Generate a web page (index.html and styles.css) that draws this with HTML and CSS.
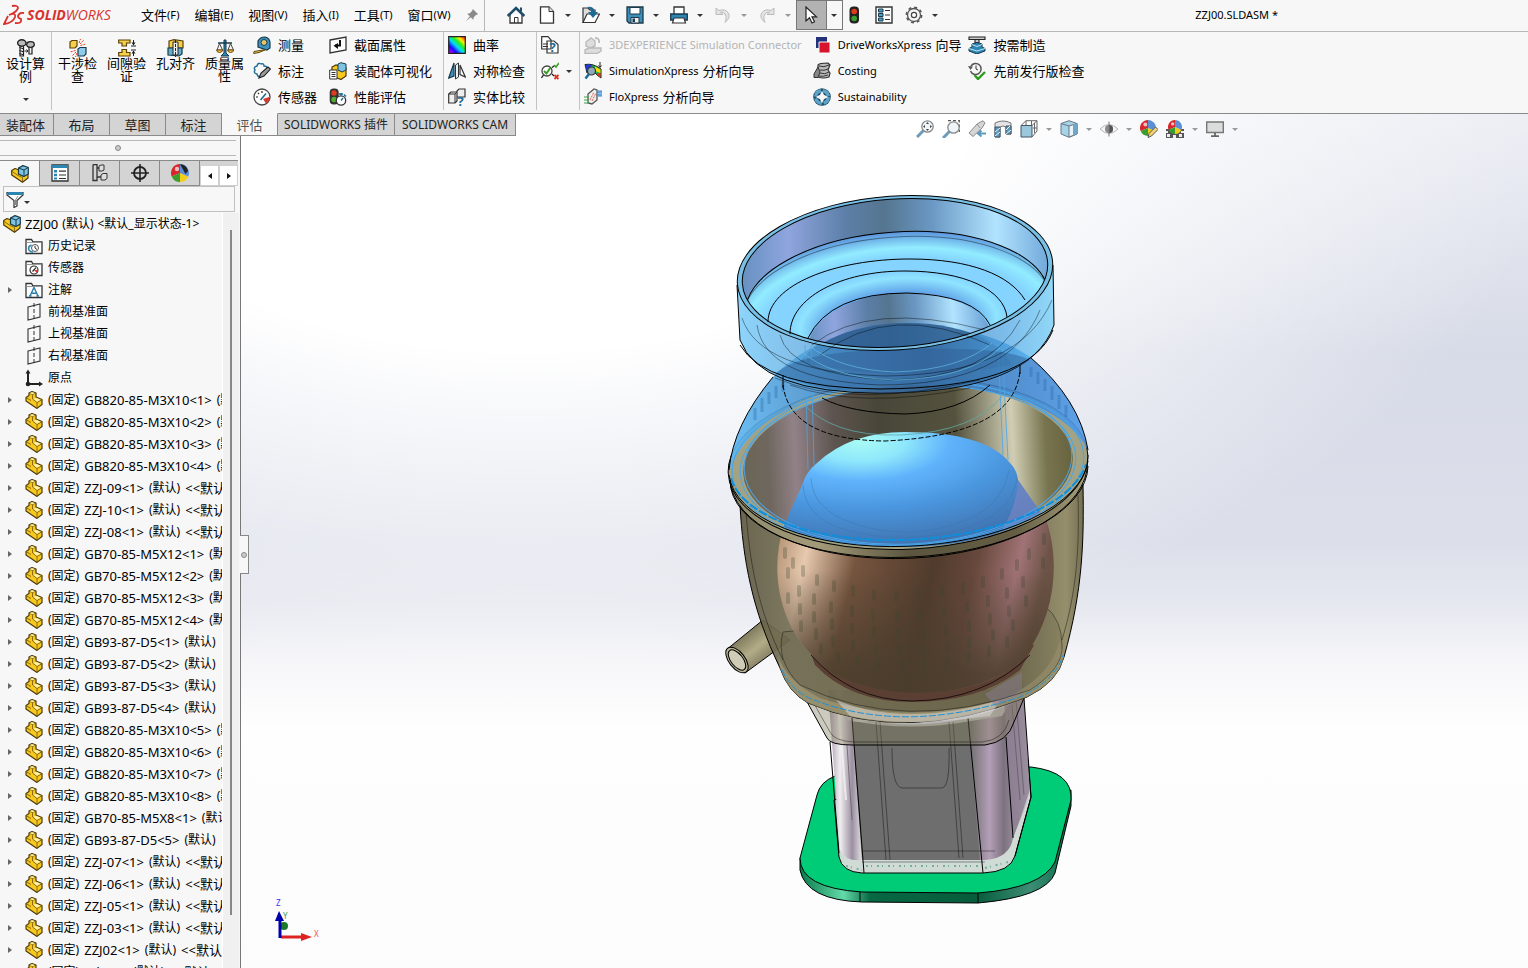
FILE: index.html
```html
<!DOCTYPE html>
<html lang="zh-CN">
<head>
	<meta charset="UTF-8">
	<title>SOLIDWORKS - ZZJ00.SLDASM</title>
	<link rel="stylesheet" href="styles.css">
</head>
<body>
<svg class="sprite" aria-hidden="true">
	<defs>
		<linearGradient id="rainbow" x1="0" y1="1" x2="1" y2="0"><stop offset="0" stop-color="#e0f"/><stop offset=".25" stop-color="#20f"/><stop offset=".45" stop-color="#0df"/><stop offset=".62" stop-color="#2e2"/><stop offset=".78" stop-color="#fe0"/><stop offset="1" stop-color="#f00"/></linearGradient>
		<!-- деталь -->
		<symbol id="i-part" viewBox="0 0 18 18"><path d="M1 10V6.500L4 4.500V2L7 .5 11 2V6L17 8.500V13.500L12 17.400 1 10Z" fill="#f7c81e" stroke="#4d3a08" stroke-linejoin="round" stroke-width="1.200"/><path d="M4 2.200 7.500 3.500 11 2M7.500 3.500V8L12 11.500 17 8.700M12 11.500V17M1 6.600 6 9.500" fill="none" stroke="#6e540c" stroke-width=".8"/><path d="M4.800 2 7 1.200 10 2.100 7.500 3.200ZM8.500 8 11 6.800 15.500 8.700 12 10.700Z" fill="#fff2a6"/></symbol>
		<!-- сборка -->
		<symbol id="i-asm" viewBox="0 0 18 18"><path d="M.7 10V5.500L4 3.500 8 5V9L12 11 17 8V13L11.500 17.300.7 10Z" fill="#f7c81e" stroke="#4d3a08" stroke-linejoin="round" stroke-width="1.200"/><path d="M1.200 6.500 7 10.500 11.500 12.500V17" fill="none" stroke="#6e540c" stroke-width=".8"/><path d="M7.500 3 12 .6 17.300 2.500V9L13 11.500 7.500 9Z" fill="#7fc3e2" stroke="#17394c" stroke-linejoin="round" stroke-width="1.200"/><path d="M7.500 3 13 5V11M13 5 17 2.500" fill="none" stroke="#17394c"/></symbol>
		<symbol id="i-folder" viewBox="0 0 18 18"><path d="M1 2.500H6.500L8 5H17V16.500H1Z" fill="#fff" stroke="#333" stroke-width="1.300"/><path d="M1.500 5.500H16.500" stroke="#999"/></symbol>
		<symbol id="i-history" viewBox="0 0 18 18"><use href="#i-folder"/><circle cx="10" cy="11" r="3.500" fill="none" stroke="#555"/><path d="M10 9V11L12 12.500" fill="none" stroke="#333"/><path d="M3.500 11.500A4 4 0 0 0 8 15M6.500 8 4 9.500 3.500 12" fill="none" stroke="#2b86b4" stroke-width="1.700"/></symbol>
		<symbol id="i-sensorf" viewBox="0 0 18 18"><use href="#i-folder"/><circle cx="9" cy="11" r="4" fill="#fff" stroke="#333" stroke-width="1.200"/><path d="M9 11 12 14A4 4 0 0 0 13 11Z" fill="#e03020"/><path d="M7.500 12.500 11 8.700" stroke="#222" stroke-width="1.200"/></symbol>
		<symbol id="i-note" viewBox="0 0 18 18"><use href="#i-folder"/><path d="M5 15 9 6.500 13 15M6.500 12.200H11.500M4 15H6.500M11.500 15H14" fill="none" stroke="#2b7fa8" stroke-width="1.400"/></symbol>
		<symbol id="i-plane" viewBox="0 0 18 18"><path d="M3 4 15 1V14L3 17Z" fill="none" stroke="#333" stroke-width="1.100"/><path d="M9 0V18" stroke="#333" stroke-dasharray="4 2"/></symbol>
		<symbol id="i-origin" viewBox="0 0 18 18"><path d="M3 2V15H16" fill="none" stroke="#222" stroke-width="2"/><path d="M.5 4.500 3 .5 5.500 4.500ZM14 12.500 18 15 14 17.500Z" fill="#222"/><circle cx="3" cy="15" r="2.300" fill="#222"/></symbol>
		<symbol id="i-filter" viewBox="0 0 18 18"><path d="M1 2.500H17V5L11 10.500V16L8 17.500V10.500L1 5Z" fill="#fff" stroke="#333" stroke-width="1.200"/><path d="M1.500 2H16.500V5H1.500Z" fill="#2b86b4"/><path d="M12 6 9.500 10V15" fill="none" stroke="#888"/></symbol>
		<symbol id="i-list" viewBox="0 0 18 18"><path d="M1 1H17V17H1Z" fill="#fff" stroke="#333" stroke-width="1.300"/><path d="M1 1H17V4H1Z" fill="#2b86b4"/><path d="M3 6H6V8.500H3ZM3 9.800H6V12.200H3ZM3 13.500H6V15.500H3Z" fill="#2b86b4"/><path d="M8 7.200H15M8 11H15M8 14.500H15" stroke="#333" stroke-width="1.200"/></symbol>
		<symbol id="i-props" viewBox="0 0 18 18"><path d="M1 1H17V17H1Z" fill="#fff" stroke="#333" stroke-width="1.400"/><path d="M3.500 3H8V6H3.500ZM3.500 7.500H8V10.500H3.500ZM3.500 12H8V15H3.500Z" fill="#4ea3cb" stroke="#17394c"/><path d="M10 4.500H15M10 9H15M10 13.500H15" stroke="#333" stroke-width="1.200"/></symbol>
		<symbol id="i-config" viewBox="0 0 18 18"><path d="M2 .5H6V16.500H2V.5M6 4H9M6 13H10" fill="none" stroke="#333" stroke-width="1.300"/><path d="M8 2 10 1H13V6L11 7H8ZM10 11 12 9.500H16V14.500L14 16H10Z" fill="#ddd" stroke="#333"/></symbol>
		<symbol id="i-target" viewBox="0 0 18 18"><circle cx="9" cy="9" r="6" fill="none" stroke="#222" stroke-width="1.800"/><path d="M9 0V18M0 9H18" stroke="#222" stroke-width="1.600"/></symbol>
		<symbol id="i-ball" viewBox="0 0 18 18"><path d="M9 9V0A9 9 0 0 0 .7 12.500Z" fill="#d8262c"/><path d="M9 9 .7 12.500A9 9 0 0 0 9 18Z" fill="#3d9c2e"/><path d="M9 9V18A9 9 0 0 0 17.300 12.500Z" fill="#f0cf1c"/><path d="M9 9 17.300 12.500A9 9 0 0 0 9 0Z" fill="#5c8fd5"/><circle cx="6" cy="5" r="2.200" fill="#fff" opacity=".7"/></symbol>
		<symbol id="i-ballk" viewBox="0 0 18 18"><use href="#i-ball"/><path d="M9 0A9 9 0 0 1 17 7L14.500 10Z" fill="#222"/></symbol>
		<symbol id="i-home" viewBox="0 0 18 18"><path d="M3 8.500V17H15V8.500" fill="#fff" stroke="#333" stroke-width="1.300"/><path d="M0.700 10 9 2 17.300 10" fill="none" stroke="#1d4d68" stroke-width="2.600"/><path d="M13 1.500H15V6L13 4.500Z" fill="#1d4d68"/><path d="M7.500 17V11.500H11V17" fill="none" stroke="#333"/></symbol>
		<symbol id="i-new" viewBox="0 0 18 18"><path d="M2.500 .8H11L15.500 5.500V17.200H2.500Z" fill="#fff" stroke="#333" stroke-width="1.300"/><path d="M11 .8V5.500H15.500" fill="#ddd" stroke="#333"/></symbol>
		<symbol id="i-open" viewBox="0 0 18 18"><path d="M1 16.500V2H6L8 4H13V16.500Z" fill="#ddd" stroke="#333" stroke-width="1.200"/><path d="M1 16.500 5 8H17.500L13 16.500Z" fill="#fff" stroke="#333" stroke-width="1.200"/><path d="M5 1Q12 0 13 6H16L11 12 6 6H9Q9 3 5 1Z" fill="#1d6a94"/></symbol>
		<symbol id="i-save" viewBox="0 0 18 18"><path d="M1 1H17V17H3L1 15Z" fill="#3c8fb9" stroke="#1d3a4a" stroke-width="1.300"/><path d="M4 1.500H14V8H4Z" fill="#fff" stroke="#1d3a4a"/><path d="M5 11.500H13V17H5Z" fill="#eee" stroke="#1d3a4a"/><path d="M6.500 12.500H9V16H6.500Z" fill="#1d3a4a"/></symbol>
		<symbol id="i-print" viewBox="0 0 18 18"><path d="M4 8V1H14V8" fill="#fff" stroke="#333" stroke-width="1.300"/><path d="M.7 8H17.300V14H.7Z" fill="#2b86b4" stroke="#1d3a4a" stroke-width="1.300"/><path d="M4 12H14L15.500 17H2.500Z" fill="#fff" stroke="#333" stroke-width="1.200"/></symbol>
		<symbol id="i-undo" viewBox="0 0 18 18"><path d="M2 2V8.500H9L6.500 6Q13 6 12 14L11 16.500Q17.500 11 14 6.500 11 2.500 5 4.500Z" fill="#e4e4e4" stroke="#bbb"/></symbol>
		<symbol id="i-arrow" viewBox="0 0 18 18"><path d="M4 1V15L7.500 11.800 10 17 12.500 15.700 10 10.800H14.500Z" fill="#fff" stroke="#222" stroke-width="1.200"/></symbol>
		<symbol id="i-light" viewBox="0 0 18 18"><rect x="4.500" y=".5" width="9.500" height="17" rx="4" fill="#222"/><circle cx="9.200" cy="5.500" r="2.800" fill="#e23a1c"/><circle cx="9.200" cy="12.500" r="2.800" fill="#38a02c"/></symbol>
		<symbol id="i-gear" viewBox="0 0 18 18"><circle cx="9" cy="9" r="6.500" fill="#f6f6f6" stroke="#555" stroke-width="1.300"/><circle cx="9" cy="9" r="7.700" fill="none" stroke="#555" stroke-width="1.500" stroke-dasharray="3.020 3.020"/><circle cx="9" cy="9" r="2.600" fill="#fff" stroke="#444" stroke-width="1.200"/></symbol>
		<symbol id="i-pin" viewBox="0 0 16 16"><path d="M9 1 15 7 12.500 8 10 10.500 9.500 13.500 6.500 10.500 1 15 5.500 9.500 2.500 6.500 5.500 6 8 3.500Z" fill="#8a8a8a"/></symbol>
		<symbol id="i-bolts" viewBox="0 0 18 18"><path d="M3 6H6.500V17H3ZM12 7H15V15H12Z" fill="#eee" stroke="#222" stroke-width="1.200"/><ellipse cx="4.800" cy="4" rx="4.200" ry="3.200" fill="#bbb" stroke="#222" stroke-width="1.400"/><ellipse cx="13.500" cy="5.500" rx="3.800" ry="2.800" fill="#bbb" stroke="#222" stroke-width="1.300"/><path d="M2.500 8.500 7 10M2.500 11.500 7 13M2.500 14.500 7 16" stroke="#222"/><path d="M7.500 12H11M9.500 10.500 11 12 9.500 13.500" fill="none" stroke="#222"/></symbol>
		<symbol id="i-interf" viewBox="0 0 18 18"><path d="M1 3 3 1.500H8V7L6 9H1Z" fill="#f7d04a" stroke="#5a430a" stroke-width="1.200"/><path d="M9 10 11 8.500H17V15L15 17H9Z" fill="#8fcbe8" stroke="#17394c" stroke-width="1.200"/><path d="M11 5 15 1M11.500 6.500 17 5M10 4 11.500 0M7 13 3 17M6.500 11.500 1 13M8 14 6.500 18" stroke="#e8421e" stroke-dasharray="2 1"/></symbol>
		<symbol id="i-clear" viewBox="0 0 18 18"><path d="M.7 1H12V4H8.500V7H4V4H.7ZM.7 17H12V13.500H8.500V10.500H4V13.500H.7Z" fill="#f7d04a" stroke="#5a430a" stroke-width="1.200"/><path d="M15.500 1V6M15.500 17V12M13 7H18M13 11H18" stroke="#222"/><path d="M13.500 3.500 15.500 6.500 17.500 3.500ZM13.500 14.500 15.500 11.500 17.500 14.500Z" fill="#222"/></symbol>
		<symbol id="i-hole" viewBox="0 0 18 18"><path d="M2 2 7 .7 16 2V9H2Z" fill="#f7d04a" stroke="#5a430a" stroke-width="1.200"/><path d="M1 9H15V15L12 17 1 16Z" fill="#5fafd0" stroke="#17394c" stroke-width="1.200"/><path d="M6 3H11V16H6Z" fill="#eee" stroke="#222"/><path d="M8.500 1V18" stroke="#222" stroke-dasharray="3 1"/></symbol>
		<symbol id="i-scale" viewBox="0 0 18 18"><path d="M8 1H10V14L13 17H5L8 14Z" fill="#2b86b4" stroke="#17394c"/><path d="M2 4H16" stroke="#17394c" stroke-width="1.500"/><path d="M3.500 4.500 1 11H6.500ZM14.500 4.500 12 11H17.500Z" fill="none" stroke="#444"/><path d="M.5 11H7Q6 13.500 3.500 13.500 1 13.500 .5 11ZM11.500 11H18Q17 13.500 14.500 13.500 12 13.500 11.500 11Z" fill="#f7c040" stroke="#6e4b0c"/></symbol>
		<symbol id="i-tape" viewBox="0 0 18 18"><path d="M5 11V5Q7 1 12 1 17 2 17 7V12L14 14Z" fill="#3c94bf" stroke="#17394c" stroke-width="1.200"/><circle cx="11" cy="6.500" r="3" fill="#e6c46a" stroke="#17394c"/><path d="M13 13.500 1 15.500 .7 17.500 6 16.500Z" fill="#f3d35c" stroke="#5a430a"/></symbol>
		<symbol id="i-cloud" viewBox="0 0 18 18"><path d="M8 2Q5 0 4 4 0 5 2 8 0 11 4 12 5 16 8 14M8 2Q11 1 11 4 14 4 14 6" fill="none" stroke="#1d6a94" stroke-width="1.400"/><path d="M6 16 8 11 15 5 17.500 7 11 14Z" fill="#999" stroke="#222" stroke-width="1.100"/></symbol>
		<symbol id="i-gauge" viewBox="0 0 18 18"><circle cx="9" cy="9" r="8" fill="#fff" stroke="#444" stroke-width="1.300"/><path d="M10 11 13 15.500 16.500 12 16 9Z" fill="#d9382a"/><path d="M3 9H5M9 3V5M5 5 6 6" stroke="#222" stroke-width="1.200"/><path d="M7.500 12 13 5.500" stroke="#1d6a94" stroke-width="1.600"/></symbol>
		<symbol id="i-sect" viewBox="0 0 18 18"><path d="M1 4 17 1V14L1 17Z" fill="#fff" stroke="#333" stroke-width="1.300"/><path d="M11 4V9.500H6" fill="none" stroke="#111" stroke-width="2"/><path d="M9 7 4.500 9.800 9 13Z" fill="#111"/></symbol>
		<symbol id="i-asmvis" viewBox="0 0 18 18"><path d="M3 5 7 3 17 6V14L12 17.500 3 14Z" fill="#f7c81e" stroke="#4d3a08" stroke-width="1.200"/><path d="M9 2 12 .7 17 2V8L13 10 9 8Z" fill="#7fc3e2" stroke="#17394c"/><path d="M.7 8H8V17H.7Z" fill="#fff" stroke="#333"/><path d="M2.500 10.500H6.500M2.500 12.500H6.500M2.500 14.500H6.500" stroke="#333"/></symbol>
		<symbol id="i-perf" viewBox="0 0 18 18"><rect x=".7" y=".5" width="9" height="16" rx="4" fill="#333"/><circle cx="5" cy="5" r="2.700" fill="#e23a1c"/><circle cx="5" cy="11.500" r="2.700" fill="#4fae2c"/><circle cx="12" cy="12.500" r="4.700" fill="#fff" stroke="#333" stroke-width="1.300"/><path d="M12 12.500 14 10M12 5V7.500M10 6H14M15 6.500 17 8.500" stroke="#1d6a94" stroke-width="1.400"/></symbol>
		<symbol id="i-curv" viewBox="0 0 18 18"><path d="M.7.700H17.300V17.300H.7Z" fill="url(#rainbow)" stroke="#222" stroke-width="1.200"/></symbol>
		<symbol id="i-sym" viewBox="0 0 18 18"><path d="M.7 16 6 1V14Z" fill="#3c94bf" stroke="#17394c" stroke-width="1.200"/><path d="M12 3 17.300 15 12 12.500Z" fill="#fff" stroke="#333" stroke-width="1.200"/><path d="M7.500 3 10.500 1V15L7.500 17Z" fill="#e8f2f7" stroke="#333"/></symbol>
		<symbol id="i-cmp" viewBox="0 0 18 18"><path d="M.7 6 3 4H9V13L7 15H.7ZM9 3 11 1H17V9H9Z" fill="#eee" stroke="#333" stroke-width="1.200"/><path d="M1 6H7V15M7 6 9 4" fill="none" stroke="#333"/><text x="9.500" y="17.500" class="q">?</text></symbol>
		<symbol id="i-docq" viewBox="0 0 18 18"><path d="M.7.700H7L10 4V13H.7ZM6 5H13L17 8.500V17H6Z" fill="#fff" stroke="#333" stroke-width="1.200"/><path d="M2 8H7M2 10.500H7" stroke="#333"/><text x="8.500" y="15.500" class="q">?</text></symbol>
		<symbol id="i-check" viewBox="0 0 18 18"><circle cx="6" cy="9" r="5" fill="#fff" stroke="#444" stroke-width="1.300"/><path d="M3 9 5.500 11.500 9.500 5.500" fill="none" stroke="#3c9a28" stroke-width="2"/><path d="M2.500 13 .5 16M11 5.500 13 4M11 12 13 14" stroke="#222" stroke-width="1.300"/><path d="M13 3 15 5 18 1" fill="none" stroke="#3c9a28" stroke-width="1.600"/><path d="M13.500 13 17.500 17M17.500 13 13.500 17" stroke="#d83222" stroke-width="1.800"/></symbol>
		<symbol id="i-3dx" viewBox="0 0 18 18"><path d="M2 6 7 2 11 5V10L6 12 2 10ZM1 14 5 12H17V15L13 17.500H1Z" fill="#ddd" stroke="#bbb" stroke-width="1.400"/><path d="M11 2Q16 2 15 7" fill="none" stroke="#bbb" stroke-width="1.800"/></symbol>
		<symbol id="i-simx" viewBox="0 0 18 18"><path d="M1 2.500Q9 1 17 7V16L13 13Q10 8 3 11Z" fill="#19b84a" stroke="#222"/><path d="M1.500 3Q5 2 8 3.500L5 8 3 10.500Z" fill="#2338d8"/><path d="M11 4.500 16.500 7.500V11L11 9Z" fill="#f5d800"/><path d="M13 11 16.500 11V15.500L13 13Z" fill="#e8321e"/><circle cx="7.500" cy="9" r="4" fill="#8fa9b8" stroke="#333" stroke-width="1.200"/><path d="M5 12 1.500 16.500" stroke="#1d6a94" stroke-width="2.500"/><path d="M16 0V5M14.500 3.500 16 5.500 17.500 3.500" fill="none" stroke="#222"/></symbol>
		<symbol id="i-flo" viewBox="0 0 18 18"><path d="M4 6 10 1 13 2V12L8 16 4 15Z" fill="#eee" stroke="#555" stroke-width="1.300"/><path d="M8 13 12 5M6 12 10 4" stroke="#e25a4a" stroke-dasharray="2 1"/><path d="M0 9H5M0 12H5M0 15H5" stroke="#3fa04a"/><path d="M13 4H18M13 7H18M15 2V9M17 2V9" stroke="#2b86d4"/></symbol>
		<symbol id="i-dwx" viewBox="0 0 18 18"><path d="M3 1H14V12H3Z" fill="#23307a"/><path d="M6 6H17V17H6Z" fill="#d8142c" stroke="#f7f7f7"/></symbol>
		<symbol id="i-cost" viewBox="0 0 18 18"><path d="M5 3Q6 1 15 1L17 3 15 8 17 11 16 15Q10 17 5 15Z" fill="#bbb" stroke="#333" stroke-width="1.200"/><path d="M6 4Q11 6 16 3M7 8Q11 9 15 7M7 11Q12 13 16 10M6 14Q10 15 15 13" fill="none" stroke="#333"/><path d="M5 5 1 12 1 15.500H5L7 10Z" fill="#888" stroke="#333"/></symbol>
		<symbol id="i-sust" viewBox="0 0 18 18"><circle cx="9" cy="9" r="8.800" fill="#1d4d68"/><circle cx="9" cy="9" r="6.300" fill="none" stroke="#5da3c6" stroke-width="3.400" stroke-dasharray="8 1.900"/><path d="M9 4.500 10.500 7.500 13.500 9 10.500 10.500 9 13.500 7.500 10.500 4.500 9 7.500 7.500Z" fill="#f7f7f7" stroke="#f7f7f7" stroke-width="1.500"/></symbol>
		<symbol id="i-mfg" viewBox="0 0 18 18"><path d="M1 1H17V3.500H1ZM7 3.500H11V6.500H7Z" fill="#ccc" stroke="#222" stroke-width="1.100"/><path d="M4 8 9 6.500 14 8V11L17 12.500V15L9 18 1 15V12.500L4 11Z" fill="#2b86b4" stroke="#17394c"/><path d="M1 12.500 9 15 17 12.500M4 8.500 9 10.500 14 8.500" fill="none" stroke="#bfe4f4"/></symbol>
		<symbol id="i-prev" viewBox="0 0 18 18"><path d="M2.500 9A5.500 5.500 0 1 0 3 4" fill="none" stroke="#555" stroke-width="1.500"/><path d="M0 4 2.500 8 5 4.500Z" fill="#555"/><path d="M8 3.500V7L10 8" fill="none" stroke="#333"/><path d="M6.500 13 10 17 17 10" fill="none" stroke="#2c9a1c" stroke-width="2.400"/></symbol>
		<symbol id="i-zoom" viewBox="0 0 18 18"><path d="M7.500 10.500 1 17" stroke="#6c9cba" stroke-width="3"/><circle cx="11.500" cy="6.500" r="5.700" fill="#eef4f7" stroke="#8a8a8a" stroke-width="1.300"/></symbol>
		<symbol id="i-zoomfit" viewBox="0 0 18 18"><use href="#i-zoom"/><path d="M11.500 2 13 4H10ZM11.500 11 13 9H10ZM7 6.500 9 5V8ZM16 6.500 14 5V8Z" fill="#444"/></symbol>
		<symbol id="i-zoomsel" viewBox="0 0 18 18"><path d="M6 .7H17.300V12" fill="none" stroke="#555" stroke-width="1.200" stroke-dasharray="3 2"/><use href="#i-zoom" y="1"/></symbol>
		<symbol id="i-torch" viewBox="0 0 18 18"><path d="M1 13 9 4 15 .7 17 3 14 8 5 16.500Z" fill="#d5d5d5" stroke="#8a8a8a"/><path d="M9 4 12 8" stroke="#999"/><path d="M18 13.500H11M13.500 10.500 10 13.500 13.500 16.500" fill="none" stroke="#5c9abd" stroke-width="2"/></symbol>
		<symbol id="i-secview" viewBox="0 0 18 18"><path d="M1 3Q9-1 17 3V14H12V7Q9 5 6 7V17H1Z" fill="#e4e4e4" stroke="#777"/><path d="M1 7H6V17H1ZM12 6H17V14H12Z" fill="#5c9abd" stroke="#456"/><path d="M1 12 6 8M1 16 6 12M12 10 16 6M12 14 17 10" stroke="#e8f4fa"/></symbol>
		<symbol id="i-cube" viewBox="0 0 18 18"><path d="M1 5.500H12V17H1Z" fill="#9cc8de" stroke="#456"/><path d="M1 5.500 6 .7H17V11L12 17M12 5.500 17 .7M6 1V5M11.500 1V5M13 8H17M14.500 3V13" fill="none" stroke="#666"/></symbol>
		<symbol id="i-box" viewBox="0 0 18 18"><path d="M1 3.500 9 .7 17 3.500V14L9 17.300 1 14Z" fill="#a8d2e6" stroke="#678"/><path d="M9 6 17 3.500V14L9 17Z" fill="#e9f3f8" stroke="#678"/><path d="M13 4.500 17 3.500V14L13 15.500Z" fill="#6fa8c6"/><path d="M1 3.500 9 6" stroke="#678"/></symbol>
		<symbol id="i-eye" viewBox="0 0 18 18"><path d="M0 9Q9 0 18 9 9 18 0 9Z" fill="#f5f5f5" stroke="#b5b5b5"/><circle cx="9" cy="9" r="4" fill="#8a8a8a"/><path d="M9 5A4 4 0 0 1 9 13Z" fill="#555"/><path d="M9 1.500V16.500" stroke="#777"/></symbol>
		<symbol id="i-balledit" viewBox="0 0 18 18"><use href="#i-ball" width="16" height="16"/><path d="M8 17.500 9 13.500 15.500 7 18 9.500 11.500 16Z" fill="#f4d470" stroke="#555"/></symbol>
		<symbol id="i-ballscene" viewBox="0 0 18 18"><path d="M0 9H18V18H0Z" fill="#555"/><path d="M1 14H4V17H1ZM7 15H10V18H7ZM13 14H16V17H13ZM15 11H18V13H15ZM0 11H2V13H0Z" fill="#eee"/><use href="#i-ball" x="2" width="14" height="14"/></symbol>
		<symbol id="i-monitor" viewBox="0 0 18 18"><path d="M.7 2H17.300V12.500H.7Z" fill="#dcdcdc" stroke="#777" stroke-width="1.400"/><path d="M9 13V16M5 16.200H13" stroke="#666" stroke-width="1.800"/></symbol>
	</defs>
</svg>

<header class="menubar">
	<a class="brand" href="#">
		<svg class="brand-mark" viewBox="0 0 22 22"><path d="M9 2Q15 1 15 4 14 8 6 11Q13 8 12 13 10 19 1 20L5 12M21 9Q16 8 15 12 15 14 18 15 19 20 12 19" fill="none" stroke="#d9322e" stroke-width="1.800"/></svg>
		<b>SOLID</b><span>WORKS</span>
	</a>
	<nav class="menus">
		<button>文件<small>(F)</small></button>
		<button>编辑<small>(E)</small></button>
		<button>视图<small>(V)</small></button>
		<button>插入<small>(I)</small></button>
		<button>工具<small>(T)</small></button>
		<button>窗口<small>(W)</small></button>
		<button aria-label="固定"><svg class="pin"><use href="#i-pin"/></svg></button>
	</nav>
	<div class="quick">
		<button aria-label="主页"><svg class="icon"><use href="#i-home"/></svg></button>
		<button class="drop" aria-label="新建"><svg class="icon"><use href="#i-new"/></svg></button>
		<button class="drop" aria-label="打开"><svg class="icon"><use href="#i-open"/></svg></button>
		<button class="drop" aria-label="保存"><svg class="icon"><use href="#i-save"/></svg></button>
		<button class="drop" aria-label="打印"><svg class="icon"><use href="#i-print"/></svg></button>
		<button class="drop off" aria-label="撤消"><svg class="icon"><use href="#i-undo"/></svg></button>
		<button class="drop off" aria-label="重做"><svg class="icon flip"><use href="#i-undo"/></svg></button>
		<button class="drop pressed" aria-label="选择"><svg class="icon"><use href="#i-arrow"/></svg></button>
		<button aria-label="重建"><svg class="icon"><use href="#i-light"/></svg></button>
		<button aria-label="文件属性"><svg class="icon"><use href="#i-props"/></svg></button>
		<button class="drop" aria-label="选项"><svg class="icon"><use href="#i-gear"/></svg></button>
	</div>
	<h1 class="doc-title">ZZJ00.SLDASM *</h1>
</header>

<section class="ribbon">
	<div class="group big-group study">
		<button class="big"><svg class="icon"><use href="#i-bolts"/></svg>设计算例<i class="caret"></i></button>
	</div>
	<div class="group tools">
		<div class="big-group">
			<button class="big"><svg class="icon"><use href="#i-interf"/></svg>干涉检查</button>
			<button class="big"><svg class="icon"><use href="#i-clear"/></svg>间隙验证</button>
			<button class="big"><svg class="icon"><use href="#i-hole"/></svg>孔对齐</button>
			<button class="big"><svg class="icon"><use href="#i-scale"/></svg>质量属性</button>
		</div>
		<div class="stack">
			<button><svg class="icon"><use href="#i-tape"/></svg>测量</button>
			<button><svg class="icon"><use href="#i-cloud"/></svg>标注</button>
			<button><svg class="icon"><use href="#i-gauge"/></svg>传感器</button>
		</div>
		<div class="stack">
			<button><svg class="icon"><use href="#i-sect"/></svg>截面属性</button>
			<button><svg class="icon"><use href="#i-asmvis"/></svg>装配体可视化</button>
			<button><svg class="icon"><use href="#i-perf"/></svg>性能评估</button>
		</div>
	</div>
	<div class="group compare">
		<div class="stack">
			<button><svg class="icon"><use href="#i-curv"/></svg>曲率</button>
			<button><svg class="icon"><use href="#i-sym"/></svg>对称检查</button>
			<button><svg class="icon"><use href="#i-cmp"/></svg>实体比较</button>
		</div>
	</div>
	<div class="group">
		<div class="stack">
			<button aria-label="比较文档"><svg class="icon"><use href="#i-docq"/></svg></button>
			<button aria-label="检查"><svg class="icon"><use href="#i-check"/></svg><i class="caret"></i></button>
		</div>
	</div>
	<div class="group xpress">
		<div class="stack">
			<button disabled><svg class="icon"><use href="#i-3dx"/></svg><span>3DEXPERIENCE Simulation Connector</span></button>
			<button><svg class="icon"><use href="#i-simx"/></svg><span>SimulationXpress</span>分析向导</button>
			<button><svg class="icon"><use href="#i-flo"/></svg><span>FloXpress</span>分析向导</button>
		</div>
		<div class="stack">
			<button><svg class="icon"><use href="#i-dwx"/></svg><span>DriveWorksXpress</span>向导</button>
			<button><svg class="icon"><use href="#i-cost"/></svg><span>Costing</span></button>
			<button><svg class="icon"><use href="#i-sust"/></svg><span>Sustainability</span></button>
		</div>
		<div class="stack">
			<button><svg class="icon"><use href="#i-mfg"/></svg>按需制造</button>
			<button><svg class="icon"><use href="#i-prev"/></svg>先前发行版检查</button>
		</div>
	</div>
</section>

<main class="work">
	<nav class="tabs">
		<button class="first">装配体</button>
		<button>布局</button>
		<button>草图</button>
		<button>标注</button>
		<button class="active">评估</button>
		<button class="wide">SOLIDWORKS 插件</button>
		<button class="wide">SOLIDWORKS CAM</button>
	</nav>

	<aside class="panel">
		<div class="splitter"><i class="dot"></i></div>
		<div class="panel-tabs">
			<button class="active" aria-label="设计树"><svg class="icon"><use href="#i-asm"/></svg></button>
			<button aria-label="属性"><svg class="icon"><use href="#i-list"/></svg></button>
			<button aria-label="配置"><svg class="icon"><use href="#i-config"/></svg></button>
			<button aria-label="尺寸"><svg class="icon"><use href="#i-target"/></svg></button>
			<button aria-label="外观"><svg class="icon"><use href="#i-ballk"/></svg></button>
			<div class="scroll-btns"><button aria-label="左"><i class="tri left"></i></button><button aria-label="右"><i class="tri"></i></button></div>
		</div>
		<label class="filter"><svg class="icon"><use href="#i-filter"/></svg><i class="caret"></i><input type="text" aria-label="过滤"></label>
		<div class="tree-wrap">
			<ul class="tree">
				<li class="root"><svg class="icon"><use href="#i-asm"/></svg><span>ZZJ00</span>(默认)<b>&lt;默认_显示状态-1&gt;</b></li>
				<li><svg class="icon"><use href="#i-history"/></svg>历史记录</li>
				<li><svg class="icon"><use href="#i-sensorf"/></svg>传感器</li>
				<li class="node"><svg class="icon"><use href="#i-note"/></svg>注解</li>
				<li><svg class="icon"><use href="#i-plane"/></svg>前视基准面</li>
				<li><svg class="icon"><use href="#i-plane"/></svg>上视基准面</li>
				<li><svg class="icon"><use href="#i-plane"/></svg>右视基准面</li>
				<li><svg class="icon"><use href="#i-origin"/></svg>原点</li>
				<li class="node"><svg class="icon"><use href="#i-part"/></svg>(固定)<span>GB820-85-M3X10&lt;1&gt;</span>(默认)</li>
				<li class="node"><svg class="icon"><use href="#i-part"/></svg>(固定)<span>GB820-85-M3X10&lt;2&gt;</span>(默认)</li>
				<li class="node"><svg class="icon"><use href="#i-part"/></svg>(固定)<span>GB820-85-M3X10&lt;3&gt;</span>(默认)</li>
				<li class="node"><svg class="icon"><use href="#i-part"/></svg>(固定)<span>GB820-85-M3X10&lt;4&gt;</span>(默认)</li>
				<li class="node"><svg class="icon"><use href="#i-part"/></svg>(固定)<span>ZZJ-09&lt;1&gt;</span>(默认)<span>&lt;&lt;默认</span></li>
				<li class="node"><svg class="icon"><use href="#i-part"/></svg>(固定)<span>ZZJ-10&lt;1&gt;</span>(默认)<span>&lt;&lt;默认</span></li>
				<li class="node"><svg class="icon"><use href="#i-part"/></svg>(固定)<span>ZZJ-08&lt;1&gt;</span>(默认)<span>&lt;&lt;默认</span></li>
				<li class="node"><svg class="icon"><use href="#i-part"/></svg>(固定)<span>GB70-85-M5X12&lt;1&gt;</span>(默认)</li>
				<li class="node"><svg class="icon"><use href="#i-part"/></svg>(固定)<span>GB70-85-M5X12&lt;2&gt;</span>(默认)</li>
				<li class="node"><svg class="icon"><use href="#i-part"/></svg>(固定)<span>GB70-85-M5X12&lt;3&gt;</span>(默认)</li>
				<li class="node"><svg class="icon"><use href="#i-part"/></svg>(固定)<span>GB70-85-M5X12&lt;4&gt;</span>(默认)</li>
				<li class="node"><svg class="icon"><use href="#i-part"/></svg>(固定)<span>GB93-87-D5&lt;1&gt;</span>(默认)</li>
				<li class="node"><svg class="icon"><use href="#i-part"/></svg>(固定)<span>GB93-87-D5&lt;2&gt;</span>(默认)</li>
				<li class="node"><svg class="icon"><use href="#i-part"/></svg>(固定)<span>GB93-87-D5&lt;3&gt;</span>(默认)</li>
				<li class="node"><svg class="icon"><use href="#i-part"/></svg>(固定)<span>GB93-87-D5&lt;4&gt;</span>(默认)</li>
				<li class="node"><svg class="icon"><use href="#i-part"/></svg>(固定)<span>GB820-85-M3X10&lt;5&gt;</span>(默认)</li>
				<li class="node"><svg class="icon"><use href="#i-part"/></svg>(固定)<span>GB820-85-M3X10&lt;6&gt;</span>(默认)</li>
				<li class="node"><svg class="icon"><use href="#i-part"/></svg>(固定)<span>GB820-85-M3X10&lt;7&gt;</span>(默认)</li>
				<li class="node"><svg class="icon"><use href="#i-part"/></svg>(固定)<span>GB820-85-M3X10&lt;8&gt;</span>(默认)</li>
				<li class="node"><svg class="icon"><use href="#i-part"/></svg>(固定)<span>GB70-85-M5X8&lt;1&gt;</span>(默认)</li>
				<li class="node"><svg class="icon"><use href="#i-part"/></svg>(固定)<span>GB93-87-D5&lt;5&gt;</span>(默认)</li>
				<li class="node"><svg class="icon"><use href="#i-part"/></svg>(固定)<span>ZZJ-07&lt;1&gt;</span>(默认)<span>&lt;&lt;默认</span></li>
				<li class="node"><svg class="icon"><use href="#i-part"/></svg>(固定)<span>ZZJ-06&lt;1&gt;</span>(默认)<span>&lt;&lt;默认</span></li>
				<li class="node"><svg class="icon"><use href="#i-part"/></svg>(固定)<span>ZZJ-05&lt;1&gt;</span>(默认)<span>&lt;&lt;默认</span></li>
				<li class="node"><svg class="icon"><use href="#i-part"/></svg>(固定)<span>ZZJ-03&lt;1&gt;</span>(默认)<span>&lt;&lt;默认</span></li>
				<li class="node"><svg class="icon"><use href="#i-part"/></svg>(固定)<span>ZZJ02&lt;1&gt;</span>(默认)<span>&lt;&lt;默认</span></li>
				<li class="node"><svg class="icon"><use href="#i-part"/></svg>(固定)<span>Zdz&lt;1&gt;</span>(默认)<span>&lt;&lt;默认</span></li>
			</ul>
			<div class="track"><i class="thumb"></i></div>
		</div>
	</aside>

	<section class="viewport">
		<div class="hud">
			<button aria-label="整屏显示"><svg class="icon"><use href="#i-zoomfit"/></svg></button>
			<button aria-label="局部放大"><svg class="icon"><use href="#i-zoomsel"/></svg></button>
			<button aria-label="上一视图"><svg class="icon"><use href="#i-torch"/></svg></button>
			<button aria-label="剖面视图"><svg class="icon"><use href="#i-secview"/></svg></button>
			<button class="drop" aria-label="视图定向"><svg class="icon"><use href="#i-cube"/></svg></button>
			<button class="drop" aria-label="显示样式"><svg class="icon"><use href="#i-box"/></svg></button>
			<button class="drop" aria-label="隐藏"><svg class="icon"><use href="#i-eye"/></svg></button>
			<button aria-label="编辑外观"><svg class="icon"><use href="#i-balledit"/></svg></button>
			<button class="drop" aria-label="应用布景"><svg class="icon"><use href="#i-ballscene"/></svg></button>
			<button class="drop" aria-label="视图设定"><svg class="icon"><use href="#i-monitor"/></svg></button>
		</div>
		<button class="handle" aria-label="折叠"><i class="dot"></i></button>
		<svg class="model" viewBox="241 114 1287 854">
			<defs>
				<linearGradient id="wall"><stop offset="0" stop-color="#6590bf"/><stop offset=".15" stop-color="#8fa5de"/><stop offset=".33" stop-color="#5c7fa8"/><stop offset=".45" stop-color="#55758f"/><stop offset=".6" stop-color="#6a98c4"/><stop offset=".8" stop-color="#b2e4ff"/><stop offset="1" stop-color="#639bd2"/></linearGradient>
				<radialGradient id="floor" cx=".5" cy=".6" r=".6" fx=".5" fy=".7"><stop offset=".38" stop-color="#5b9be6"/><stop offset=".54" stop-color="#8fe4ff"/><stop offset=".6" stop-color="#84d4ff"/><stop offset=".74" stop-color="#84d4ff"/><stop offset=".84" stop-color="#92ecff"/><stop offset="1" stop-color="#5a92dc"/></radialGradient>
				<linearGradient id="bowlIn"><stop offset="0" stop-color="#6a6655"/><stop offset=".08" stop-color="#6f675f"/><stop offset=".16" stop-color="#918288"/><stop offset=".28" stop-color="#5d544f"/><stop offset=".42" stop-color="#484638"/><stop offset=".65" stop-color="#55533e"/><stop offset=".82" stop-color="#d0cdb4"/><stop offset=".92" stop-color="#77744f"/><stop offset="1" stop-color="#67633f"/></linearGradient>
				<linearGradient id="bowlOut"><stop offset="0" stop-color="#615b44"/><stop offset=".15" stop-color="#757054"/><stop offset=".8" stop-color="#6a6347"/><stop offset=".95" stop-color="#8f8862"/><stop offset="1" stop-color="#6d6748"/></linearGradient>
				<linearGradient id="neck"><stop offset="0" stop-color="#8d8a6b"/><stop offset=".25" stop-color="#a39a78"/><stop offset=".5" stop-color="#5c5640"/><stop offset=".8" stop-color="#655e44"/><stop offset="1" stop-color="#a8a27e"/></linearGradient>
				<linearGradient id="basket" x1="0" x2="1" y1="0" y2=".15"><stop offset="0" stop-color="#a98567"/><stop offset=".14" stop-color="#e6c9ae"/><stop offset=".32" stop-color="#76553f"/><stop offset=".6" stop-color="#503b2c"/><stop offset=".75" stop-color="#67483c"/><stop offset=".9" stop-color="#a17376"/><stop offset="1" stop-color="#6c5346"/></linearGradient>
				<linearGradient id="shade" x1="0" x2="0" y1="0" y2="1"><stop offset=".35" stop-color="#4a3d2c" stop-opacity="0"/><stop offset=".9" stop-color="#4a3d2c" stop-opacity=".85"/></linearGradient>
				<radialGradient id="dome" cx=".3" cy=".08" r=".95"><stop offset="0" stop-color="#a8fbf5"/><stop offset=".18" stop-color="#8fe8fb"/><stop offset=".36" stop-color="#60b4fc"/><stop offset=".62" stop-color="#4a96de"/><stop offset="1" stop-color="#4070ac"/></radialGradient>
				<linearGradient id="cover"><stop offset="0" stop-color="#5cb8f4"/><stop offset=".3" stop-color="#4a88c0"/><stop offset=".7" stop-color="#3d7ec0"/><stop offset="1" stop-color="#4f9ae8"/></linearGradient>
				<linearGradient id="side"><stop offset="0" stop-color="#62c4fa"/><stop offset=".3" stop-color="#4c98d4"/><stop offset=".6" stop-color="#3b74ac"/><stop offset=".85" stop-color="#4fa8e6"/><stop offset="1" stop-color="#6bcdf8"/></linearGradient>
				<linearGradient id="post"><stop offset="0" stop-color="#a292a6"/><stop offset=".06" stop-color="#f0eef0"/><stop offset=".12" stop-color="#9b8fa0"/><stop offset=".17" stop-color="#e4e4e4"/><stop offset=".2" stop-color="#6e6e6e"/><stop offset=".7" stop-color="#6e6e6e"/><stop offset=".8" stop-color="#b49fb8"/><stop offset=".87" stop-color="#7c717e"/><stop offset=".95" stop-color="#a79baa"/><stop offset="1" stop-color="#d8d6da"/></linearGradient>
				<linearGradient id="plate"><stop offset="0" stop-color="#0a7a4c"/><stop offset=".16" stop-color="#62dba8"/><stop offset=".26" stop-color="#076843"/><stop offset=".65" stop-color="#065c3b"/><stop offset=".85" stop-color="#3c8d74"/><stop offset="1" stop-color="#0a6b48"/></linearGradient>
				<linearGradient id="pipe" x1="0" y1="0" x2="1" y2="1"><stop offset=".2" stop-color="#6f6a50"/><stop offset=".5" stop-color="#b2ac88"/><stop offset=".8" stop-color="#69644c"/></linearGradient>
				<clipPath id="mouth"><ellipse cx="895" cy="273" rx="153" ry="74" transform="rotate(-4 895 273)"/></clipPath>
			</defs>
			<!-- основание -->
			<g class="edge">
				<path fill="url(#plate)" d="M800 858V870Q806 900 862 902L978 903Q1046 897 1055 873L1071 806V790Z"/>
				<path fill="#00cc78" d="M835 776Q820 782 817 795L800 858Q800 888 862 892L978 893Q1042 888 1055 862L1071 800Q1073 772 1031 767Z"/>
				<path d="M860 892V902M978 893V903"/>
				<path fill="#d0dbd6" d="M834 800 839 857Q842 872 862 873L983 873Q1010 872 1015 856L1031 797 1028 760Z"/>
			</g>
			<!-- корпус двигателя -->
			<path fill="url(#post)" d="M828 690 840 850Q846 862 862 860L985 860Q1010 858 1013 838L1030 795 1023 690Z"/>
			<path fill="#6e6e6e" d="M852 722 862 860H980L968 722Z"/>
			<path fill="#c7c7c6" d="M836 696 848 720Q905 732 965 722L1002 716 1018 690Z" opacity=".8"/>
			<path fill="#8d8092" d="M1004 700 1023 680 1030 790 1013 838Z" opacity=".8"/>
			<path stroke="#f2f2f2" stroke-width="2" fill="none" d="M838 700 846 800" opacity=".8"/>
			<path stroke="#5d5560" fill="none" d="M1012 705 1020 800M1016 700 1024 795M847 745 852 820" opacity=".7"/>
			<g class="edge faint"><path d="M876 722 886 860M880 722 890 860M949 722 959 858M953 722 963 858M892 748Q892 787 902 788L942 788Q950 787 949 748M863 851H995M862 862H985"/></g>
			<g class="edge"><path d="M830 742 839 853M852 718 864 873M968 718 983 873M1006 737 1013 838M1024 698 1031 797 1015 856"/></g>
			<path stroke="#4f9c84" stroke-width="2" stroke-dasharray="2 3 1 5" d="M866 866H978M846 866 862 870M985 868 1008 862" opacity=".7"/>
			<!-- юбка чаши -->
			<path fill="#7d7758" fill-opacity=".38" d="M806 700 827 738Q830 745 852 745L985 745Q1008 742 1014 722L1024 698Q915 750 806 700Z"/>
			<g class="edge"><path d="M806 700 827 738Q830 745 852 745L985 745Q1008 742 1014 722L1024 698"/><path class="faint" d="M812 700 830 732Q834 741 854 742L982 742Q1004 740 1009 720"/></g>
			<!-- патрубок -->
			<g class="edge">
				<path fill="url(#pipe)" d="M726 650 763 620 790 640 745 673Q730 668 726 650Z"/>
				<ellipse cx="737" cy="660" rx="15" ry="8" transform="rotate(52 737 660)" fill="#b9b595"/>
				<ellipse cx="737" cy="660" rx="12" ry="6" transform="rotate(52 737 660)" fill="#cfcdb8"/>
			</g>
			<!-- чаша -->
			<path class="line" fill="url(#bowlOut)" fill-opacity=".93" d="M740 505C743 560 752 610 780 668Q788 692 808 703 905 745 1027 697 1058 682 1064 657C1083 590 1084 540 1083 485Z"/>
			<path fill="#a39a75" fill-opacity=".7" d="M780 668Q788 692 808 703 905 745 1027 697 1058 682 1064 657L1060 640Q1050 680 1000 700 905 726 820 698 785 680 778 655Z"/>
			<path fill="#d8d6d4" fill-opacity=".55" d="M836 700Q905 728 1000 700L990 716Q905 728 850 716Z"/>
			<path fill="#8d8298" fill-opacity=".6" d="M985 694 1022 672V694L995 706Z"/>
			<path class="line faint" fill="#57513a" fill-opacity=".45" d="M783 632Q775 660 800 685 905 735 1030 690 1064 668 1062 645 1062 620 1045 606Z"/>
			<path class="line faint" fill="none" d="M746 510C749 560 758 610 783 660M1078 495C1080 560 1074 600 1062 640"/>
			<path fill="none" stroke="#1b93dc" stroke-dasharray="7 2" d="M782 670Q792 692 814 700 905 735 1020 697 1056 680 1063 655"/>
			<!-- сетчатый барабан -->
			<path fill="#5b3f33" d="M808 645 815 665Q850 702 912 702 980 702 1020 670L1034 645Z"/>
			<path fill="url(#basket)" d="M784 525C768 575 782 625 812 655 840 700 980 710 1026 655 1058 610 1062 550 1040 505Z"/>
			<path fill="url(#shade)" d="M784 525C768 575 782 625 812 655 840 700 980 710 1026 655 1058 610 1062 550 1040 505Z"/>
			<g class="slots">
				<path d="M785 549v8M793 559v8M803 567v8M817 576v8M834 582v8M853 587v8M874 591v8M896 592v8M919 591v8M942 588v8M963 584v8M983 578v8M1002 570v8M1017 561v8M1029 550v8M1044 535v8"/>
				<path d="M788 569v8M799 587v8M814 595v8M831 603v8M852 607v8M873 611v8M897 612v8M920 611v8M944 608v8M967 603v8M988 597v8M1007 589v8M1023 578v8M1043 559v8"/>
				<path d="M788 594v8M800 605v8M814 613v8M832 620v8M852 625v8M874 628v8M898 630v8M923 629v8M946 627v8M969 622v8M990 615v8M1009 607v8M1026 597v8"/>
				<path d="M801 622v8M816 630v8M833 637v8M853 642v8M876 645v8M899 646v8M923 646v8M947 643v8M969 638v8M993 631v8M1013 621v8"/>
				<path d="M821 645v8M838 653v8M857 657v8M878 660v8M901 662v8M924 661v8M947 658v8M969 653v8M989 647v8M1007 638v8"/>
			</g>
			<path class="line" stroke="#8a4c3c" fill="none" d="M811 655Q850 700 912 701 985 700 1030 655" opacity=".7"/>
			<!-- горловина чаши -->
			<path class="line" fill="url(#neck)" d="M729 470 731 487A179 88-3 0 0 1087 470L1088 455Z"/>
			<ellipse class="line" cx="908" cy="464" rx="180" ry="85" transform="rotate(-3 908 464)" fill="#a3a383"/>
			<ellipse cx="908" cy="465" rx="165" ry="80" transform="rotate(-3 908 465)" fill="url(#bowlIn)"/>
			<!-- внутренний купол -->
			<path fill="url(#dome)" d="M783 528 803 483Q806 472 817 463 850 432 905 432 985 432 1010 463 1017 470 1018 480L1041 513Q985 548 895 547 825 545 783 528Z"/>
			<path fill="#7484c0" opacity=".75" d="M1018 480 1041 513 1000 532Q1016 510 1018 480Z"/>
			<path fill="none" stroke="#3a75ad" opacity=".45" d="M803 485Q805 520 850 531 905 545 960 530 1012 515 1017 478M811 478Q812 510 855 524 905 540 955 524 1002 510 1009 470"/>
			<!-- прозрачная крышка -->
			<path fill="url(#cover)" fill-opacity=".9" d="M729 470Q733 425 773 377 820 328 905 323 985 326 1030 357 1080 400 1088 450 1070 415 1010 396 905 372 815 396 750 420 729 470Z"/>
			<path fill="#2e578a" fill-opacity=".88" d="M800 362Q825 326 910 323 990 325 1012 365 905 385 800 362Z"/>
			<path class="line" fill="none" d="M729 470Q733 425 773 377M1030 357Q1080 400 1088 450"/>
			<path stroke="#2f6fac" stroke-width="3" opacity=".4" d="M755 408v12M762 398v14M769 392v12M776 386v12M783 382v10M1031 367v10M1038 372v12M1045 379v12M1052 386v14M1059 395v14M1066 405v12"/>
			<g fill="none" stroke="#4aa5ea">
				<ellipse cx="908" cy="464" rx="176" ry="82" transform="rotate(-3 908 464)"/>
				<ellipse cx="908" cy="465" rx="168" ry="80" transform="rotate(-3 908 465)"/>
				<ellipse cx="908" cy="462" rx="164" ry="82" transform="rotate(-3 908 462)"/>
				<path d="M805 345 808 470M811 345 814 465M998 345 1003 455M1002 345 1008 460" opacity=".8"/>
			</g>
			<path fill="none" stroke="#0e8fdc" stroke-width="2" stroke-dasharray="9 2" d="M731 478A179 78-3 0 0 1086 464"/>
			<g class="edge"><path d="M729 475A180 83-3 0 0 1088 461M730 480A179 84-3 0 0 1088 466"/></g>
			<!-- загрузочная воронка -->
			<path class="line" fill="url(#side)" fill-opacity=".72" d="M737 285 740 340Q760 393 880 393 1030 393 1054 325L1053 265Z"/>
			<path fill="#2f5f96" fill-opacity=".5" d="M775 374Q830 395 890 393 980 392 1030 360 1000 345 900 350 800 350 775 374Z"/>
			<ellipse cx="895" cy="273" rx="158" ry="77" transform="rotate(-4 895 273)" fill="#78bfe6"/>
			<g clip-path="url(#mouth)">
				<rect x="740" y="190" width="320" height="170" fill="url(#wall)"/>
				<ellipse cx="897" cy="304" rx="152" ry="72" transform="rotate(-4 897 304)" fill="url(#floor)"/>
				<ellipse class="edge" cx="897" cy="304" rx="152" ry="72" transform="rotate(-4 897 304)"/>
				<ellipse class="edge faint" cx="897" cy="309" rx="154" ry="72" transform="rotate(-4 897 309)"/>
				<ellipse cx="900" cy="343" rx="92" ry="50" transform="rotate(-4 900 343)" fill="url(#wall)"/>
				<ellipse cx="908" cy="378" rx="110" ry="55" fill="#2e5f92" fill-opacity=".9"/>
			</g>
			<g class="edge">
				<ellipse cx="895" cy="273" rx="158" ry="77" transform="rotate(-4 895 273)"/>
				<ellipse cx="895" cy="273" rx="153" ry="74" transform="rotate(-4 895 273)"/>
				<path d="M768 322C768 285 835 259 910 259 970 259 1010 275 1025 300M790 334C790 298 840 271 905 271 965 271 1004 290 1007 317M808 338Q830 293 907 293 975 295 990 325"/>
				<path d="M740 345Q765 388 880 389 1030 388 1053 330"/>
			</g>
			<g class="edge faint">
				<path d="M757 325Q765 380 880 385 1010 385 1040 310M780 335Q790 375 890 380 990 378 1020 320M812 345Q870 300 985 330M820 355Q890 300 990 345M742 318Q760 372 885 376 1020 375 1052 300M775 378Q850 410 980 380M790 385Q860 410 970 388"/>
			</g>
			<path fill="none" stroke="#6bc4ea" d="M800 350Q830 378 895 380 970 378 1000 348M808 345Q840 370 895 372 960 370 992 343" opacity=".6"/>
			<path fill="none" stroke="#000" stroke-dasharray="5 2" d="M783 385Q790 440 885 441 1015 435 1020 370"/>
			<path fill="none" stroke="#5fa9a9" d="M800 400Q830 437 900 435 975 432 1003 395" opacity=".8"/>
			<path fill="none" stroke="#000" d="M822 398Q850 413 905 414 960 412 990 385M783 375V388M1020 365V374"/>
			<!-- оси координат -->
			<g class="axes">
				<path stroke="#d22" stroke-width="3" d="M281 937H304"/><path fill="#d22" d="M301 933 312 937 301 941Z"/>
				<circle cx="284" cy="926" r="4" fill="#1c7a2a"/>
				<path stroke="#00a" stroke-width="3" d="M280 938V918"/><path fill="#00a" d="M275 921 279 911 284 921Z"/>
				<text x="276" y="906" fill="#33f">Z</text><text x="283" y="919" fill="#3a9a4a">Y</text><text x="314" y="937" fill="#e55">X</text>
			</g>
		</svg>
	</section>
</main>
</body>
</html>
```
FILE: styles.css
```css
* {
	box-sizing: border-box;
}

body {
	display: flex;
	flex-direction: column;
	height: 100vh;
	margin: 0;
	overflow: hidden;
	background: #f7f7f7;
	color: #000;
	font: 13px/16px "Noto Sans", "Noto Sans CJK SC", sans-serif;
}

button {
	display: flex;
	align-items: center;
	margin: 0;
	padding: 0;
	border: 0;
	background: none;
	color: inherit;
	font: inherit;
	white-space: nowrap;
}

.sprite {
	position: absolute;
	width: 0;
	height: 0;
}

.q { /*знак вопроса в значках*/
	font: bold 13px "Noto Sans", sans-serif;
	fill: #1d6a94;
}

.icon {
	flex: none;
	width: 18px;
	height: 18px;
}

.caret, .drop::after { /*стрелка выпадающего списка*/
	content: "";
	flex: none;
	border: 3px solid transparent;
	border-top-color: #333;
	border-bottom: 0;
}

/* верхнее меню */
.menubar {
	display: flex;
	flex: none;
	align-items: center;
	height: 32px;
	padding-bottom: 1px;
	border-bottom: 1px solid #b8b8b8;
}

.brand {
	display: flex;
	align-items: center;
	width: 133px;
	padding-left: 3px;
	color: #d9322e;
	font: italic 14px/20px "Open Sans", sans-serif;
	text-decoration: none;
}

.brand-mark {
	width: 22px;
	height: 22px;
	margin-right: 2px;
}

.menus {
	display: flex;
	align-items: center;
	gap: 15px;
	height: 31px;
	padding: 0 5px 1px 8px;
	border-right: 1px solid #b8b8b8;
}

.menus small {
	font-size: 11px;
}

.pin {
	width: 14px;
	height: 14px;
}

.quick {
	display: flex;
	align-items: center;
	height: 30px;
	padding-left: 22px;
}

.quick button {
	gap: 9px;
	margin-right: 13px;
}

.quick .drop {
	margin-right: 11px;
}

.quick .off {
	color: #aaa;
}

.off::after {
	border-top-color: #999;
}

.flip {
	transform: scaleX(-1);
}

.quick .pressed {
	align-self: stretch;
	gap: 11px;
	margin: 0 2px 0 -6px;
	padding: 0 5px 0 5px;
	border: 1px solid #777;
	background: linear-gradient(90deg, #b2b2b2 29px, #777 29px, #777 30px, #f7f7f7 30px);
}

.quick .pressed ~ button {
	margin-right: 12px;
}

.doc-title {
	margin: 0 250px 0 auto;
	font: 11px/16px "Noto Sans", sans-serif;
}

/* лента */
.ribbon {
	display: flex;
	flex: none;
	height: 81px;
}

.group {
	display: flex;
	margin-bottom: 3px;
	padding: 0 4px;
	border-right: 1px solid #c4c4c4;
}

.group:last-child {
	border: 0;
}

.big-group {
	display: flex;
	padding: 0;
}

.big {
	flex-direction: column;
	width: 49px;
	padding: 7px 4px 0;
	line-height: 13px;
	white-space: normal;
}

.study .big {
	width: 51px;
	padding: 7px 5px 0;
}

.big .caret {
	margin-top: 15px;
}

.tools {
	gap: 12px;
	padding: 0 11px 0 1px;
}

.tools .big-group {
	margin-right: -8px;
}

.compare {
	padding-right: 11px;
}

.stack {
	display: flex;
	flex-direction: column;
}

.stack button {
	height: 26px;
}

.stack .icon {
	margin-right: 7px;
}

.stack span {
	margin-right: 4px;
	font-size: 11px;
}

.stack button:disabled {
	color: #b4b4b4;
}

.stack .caret {
	margin-right: 3px;
}

.xpress {
	gap: 7px;
}

/* вкладки поверх рабочей области */
.work {
	position: relative;
	display: flex;
	flex: 1;
	min-height: 0;
	border-top: 1px solid #8a8a8a;
}

.tabs {
	position: absolute;
	z-index: 1;
	top: -1px;
	left: 0;
	display: flex;
	height: 23px;
	border-bottom: 1px solid #8a8a8a;
}

.tabs button {
	justify-content: center;
	width: 56px;
	border: solid #8a8a8a;
	border-width: 1px 1px 0 0;
	background: #d4d4d4;
	color: #222;
}

.tabs .first {
	width: 54px;
	padding-right: 2px;
}

.tabs .active {
	border-top-color: #f7f7f7;
	background: #f7f7f7;
	color: #555;
}

.tabs .wide {
	width: 117px;
	font-size: 12px;
}

.tabs .wide:last-child {
	width: 121px;
}

/* левая панель */
.panel {
	display: flex;
	flex: none;
	flex-direction: column;
	width: 241px;
	padding-top: 26px;
	border-right: 1px solid #777;
}

.splitter {
	display: flex;
	align-items: center;
	justify-content: center;
	height: 16px;
	margin-right: 4px;
	border: solid #b8b8b8;
	border-width: 1px 0;
}

.dot {
	width: 6px;
	height: 6px;
	border: 1px solid #888;
	border-radius: 50%;
	background: #ccc;
}

.panel-tabs {
	display: flex;
	height: 26px;
	margin: 4px 2px 0 0;
	border-top: 1px solid #8a8a8a;
	background: #d4d4d4;
}

.panel-tabs > button {
	justify-content: center;
	width: 40px;
	border: solid #8a8a8a;
	border-width: 0 1px 1px 0;
}

.panel-tabs .active {
	border-bottom: 0;
	background: #f7f7f7;
}

.scroll-btns {
	display: flex;
	flex: 1;
	margin-top: 4px;
	background: #fff;
}

.scroll-btns button {
	flex: 1;
	justify-content: center;
	border: 1px solid #d0d0d0;
}

.tri {
	border: 3px solid transparent;
	border-left: 4px solid #111;
	border-right: 0;
}

.left {
	transform: scaleX(-1);
}

.filter {
	display: flex;
	align-items: center;
	height: 26px;
	margin: 0 5px 1px 3px;
	padding-left: 2px;
	border: 1px solid #c0c0c0;
}

.filter .caret {
	margin: 6px 0 0;
}

.filter input {
	flex: 1;
	min-width: 0;
	border: 0;
	background: none;
}

.tree-wrap {
	display: flex;
	flex: 1;
	min-height: 0;
}

.tree {
	flex: 1;
	min-width: 0;
	margin: 0;
	padding: 0;
	overflow: hidden;
	font-size: 12px;
	list-style: none;
}

.tree li {
	display: flex;
	align-items: center;
	gap: 5px;
	height: 22px;
	padding-left: 25px;
	white-space: nowrap;
}

.tree span {
	font-size: 13px;
}

.tree b {
	font-weight: normal;
}

.tree .root {
	gap: 4px;
	padding-left: 3px;
}

.tree .node {
	padding-left: 8px;
}

.node::before { /*стрелка раскрытия узла*/
	content: "";
	margin-right: 8px;
	border: 3px solid transparent;
	border-left: 4px solid #666;
	border-right: 0;
}

.track {
	width: 17px;
	margin-right: 1px;
	padding: 17px 0 53px 7px;
	border-left: 1px solid #fff;
	background: #f0f0f0;
}

.thumb {
	display: block;
	width: 2px;
	height: 100%;
	background: #888;
}

/* графическая область */
.viewport {
	position: relative;
	flex: 1;
	min-width: 0;
	background:
		radial-gradient(ellipse 80% 66% at 22% 0, #fff 42%, rgba(255, 255, 255, 0) 100%),
		linear-gradient(180deg, #eceef4 0, #d7dbe7 28%, #dcdfea 50%, #e5e7ef 57%, #f6f6f9 64%, #fefefe 72%, #fcfcfd 100%);
}

.model {
	display: block;
	width: 100%;
	height: 100%;
}

.hud { /*панель видов поверх модели*/
	position: absolute;
	top: 6px;
	left: 675px;
	display: flex;
	gap: 8px;
}

.hud .drop {
	gap: 8px;
}

.hud .drop::after {
	border-top-color: #999;
}

.handle { /*ручка сворачивания панели*/
	position: absolute;
	top: 421px;
	left: -1px;
	justify-content: center;
	width: 9px;
	height: 39px;
	border: 1px solid #888;
	border-left: 0;
	background: #f7f7f7;
}

.edge, .line {
	stroke: #000;
	stroke-width: 1;
}

.edge {
	fill: none;
}

.faint {
	opacity: .4;
}

.slots {
	fill: none;
	stroke: #3a4630;
	stroke-width: 4;
	stroke-linecap: round;
	opacity: .28;
}

.axes text {
	font: 8px "Noto Sans", sans-serif;
}
```
